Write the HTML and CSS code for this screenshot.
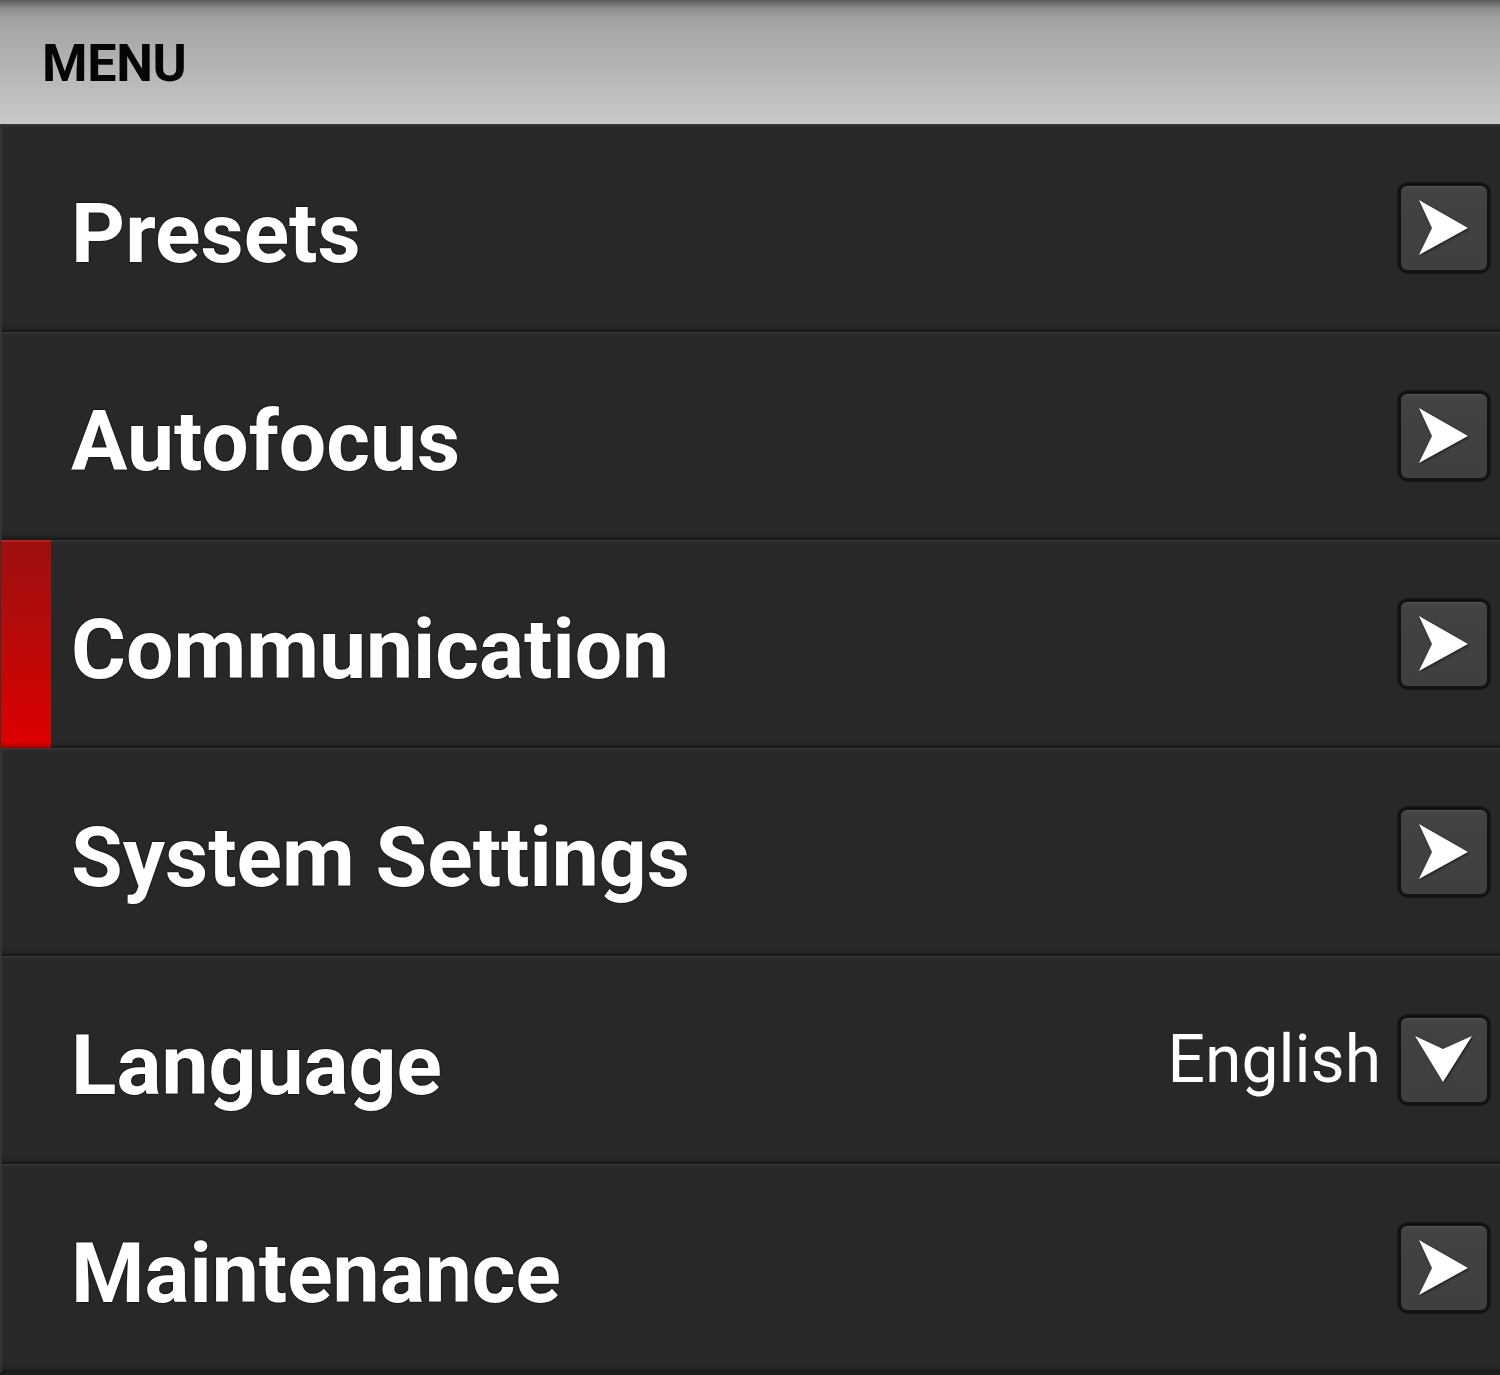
FILE: index.html
```html
<!DOCTYPE html>
<html>
<head>
<meta charset="utf-8">
<link rel="stylesheet" href="styles.css">
</head>
<body>
<header class="header"><span class="header-title">MENU</span></header>
<ul class="menu">
  <li class="row"><span class="label">Presets</span><span class="btn"><svg class="icon" viewBox="0 0 86 84"><polygon points="18,14 67,42 18,69 31,42"/></svg></span></li>
  <li class="row"><span class="label">Autofocus</span><span class="btn"><svg class="icon" viewBox="0 0 86 84"><polygon points="18,14 67,42 18,69 31,42"/></svg></span></li>
  <li class="row row-active"><span class="marker"></span><span class="label">Communication</span><span class="btn"><svg class="icon" viewBox="0 0 86 84"><polygon points="18,14 67,42 18,69 31,42"/></svg></span></li>
  <li class="row"><span class="label">System Settings</span><span class="btn"><svg class="icon" viewBox="0 0 86 84"><polygon points="18,14 67,42 18,69 31,42"/></svg></span></li>
  <li class="row"><span class="label">Language</span><span class="value">English</span><span class="btn"><svg class="icon" viewBox="0 0 86 84"><polygon points="14,18 42,31 71,18 42,64"/></svg></span></li>
  <li class="row"><span class="label">Maintenance</span><span class="btn"><svg class="icon" viewBox="0 0 86 84"><polygon points="18,14 67,42 18,69 31,42"/></svg></span></li>
</ul>
</body>
</html>
```
FILE: styles.css
```css
html, body {
  margin: 0;
  padding: 0;
}
body {
  width: 1500px;
  height: 1375px;
  overflow: hidden;
  background: #1e1e1e;
  font-family: Roboto, "Liberation Sans", sans-serif;
}
.header {
  height: 124px;
  box-sizing: border-box;
  display: flex;
  align-items: center;
  padding-left: 42px;
  padding-top: 2px;
  background: linear-gradient(to bottom, #5a5a5a 0px, #8a8a8a 8px, #a2a2a2 18px, #b2b2b2 60px, #c9c9c9 124px);
}
.header-title {
  font-weight: 700;
  font-size: 52px;
  color: #050505;
  letter-spacing: -0.3px;
}
.menu {
  list-style: none;
  margin: 0;
  padding: 0;
}
.row {
  position: relative;
  height: 208px;
  box-sizing: border-box;
  display: flex;
  align-items: center;
  padding-left: 69px;
  padding-right: 10px;
  border-top: 1px solid #3a3a3a;
  border-left: 2px solid #333;
  background: linear-gradient(to bottom, #2e2e2e 0px, #282828 4px, #282828 calc(100% - 6px), #1f1f1f calc(100% - 2px), #161616 100%);
}
.marker {
  position: absolute;
  left: -1px;
  top: -1px;
  width: 50px;
  height: 208px;
  background: linear-gradient(to bottom, #c02a2a 0px, #9e0f0f 3px, #b40b0b 40%, #dd0000 calc(100% - 6px), #a00000 100%);
}
.label {
  flex: 1;
  color: #fff;
  font-weight: 700;
  font-size: 84px;
  letter-spacing: 0;
  text-shadow: 0 0 2px #000;
  margin-top: 10px;
}
.value {
  color: #fff;
  font-size: 66px;
  font-weight: 400;
  margin-right: 17px;
  margin-top: -2px;
}
.btn {
  width: 86px;
  height: 84px;
  border: 3px solid #121212;
  border-radius: 9px;
  background: linear-gradient(to bottom, #4a4a4a 0px, #424242 6px, #3f3f3f 100%);
  box-shadow: inset 0 1px 0 #585858, 0 0 2px #000;
  margin-top: -2px;
}
.icon {
  display: block;
  width: 86px;
  height: 84px;
  fill: #fff;
  filter: drop-shadow(1px 1px 1px rgba(0,0,0,0.6));
}
```
